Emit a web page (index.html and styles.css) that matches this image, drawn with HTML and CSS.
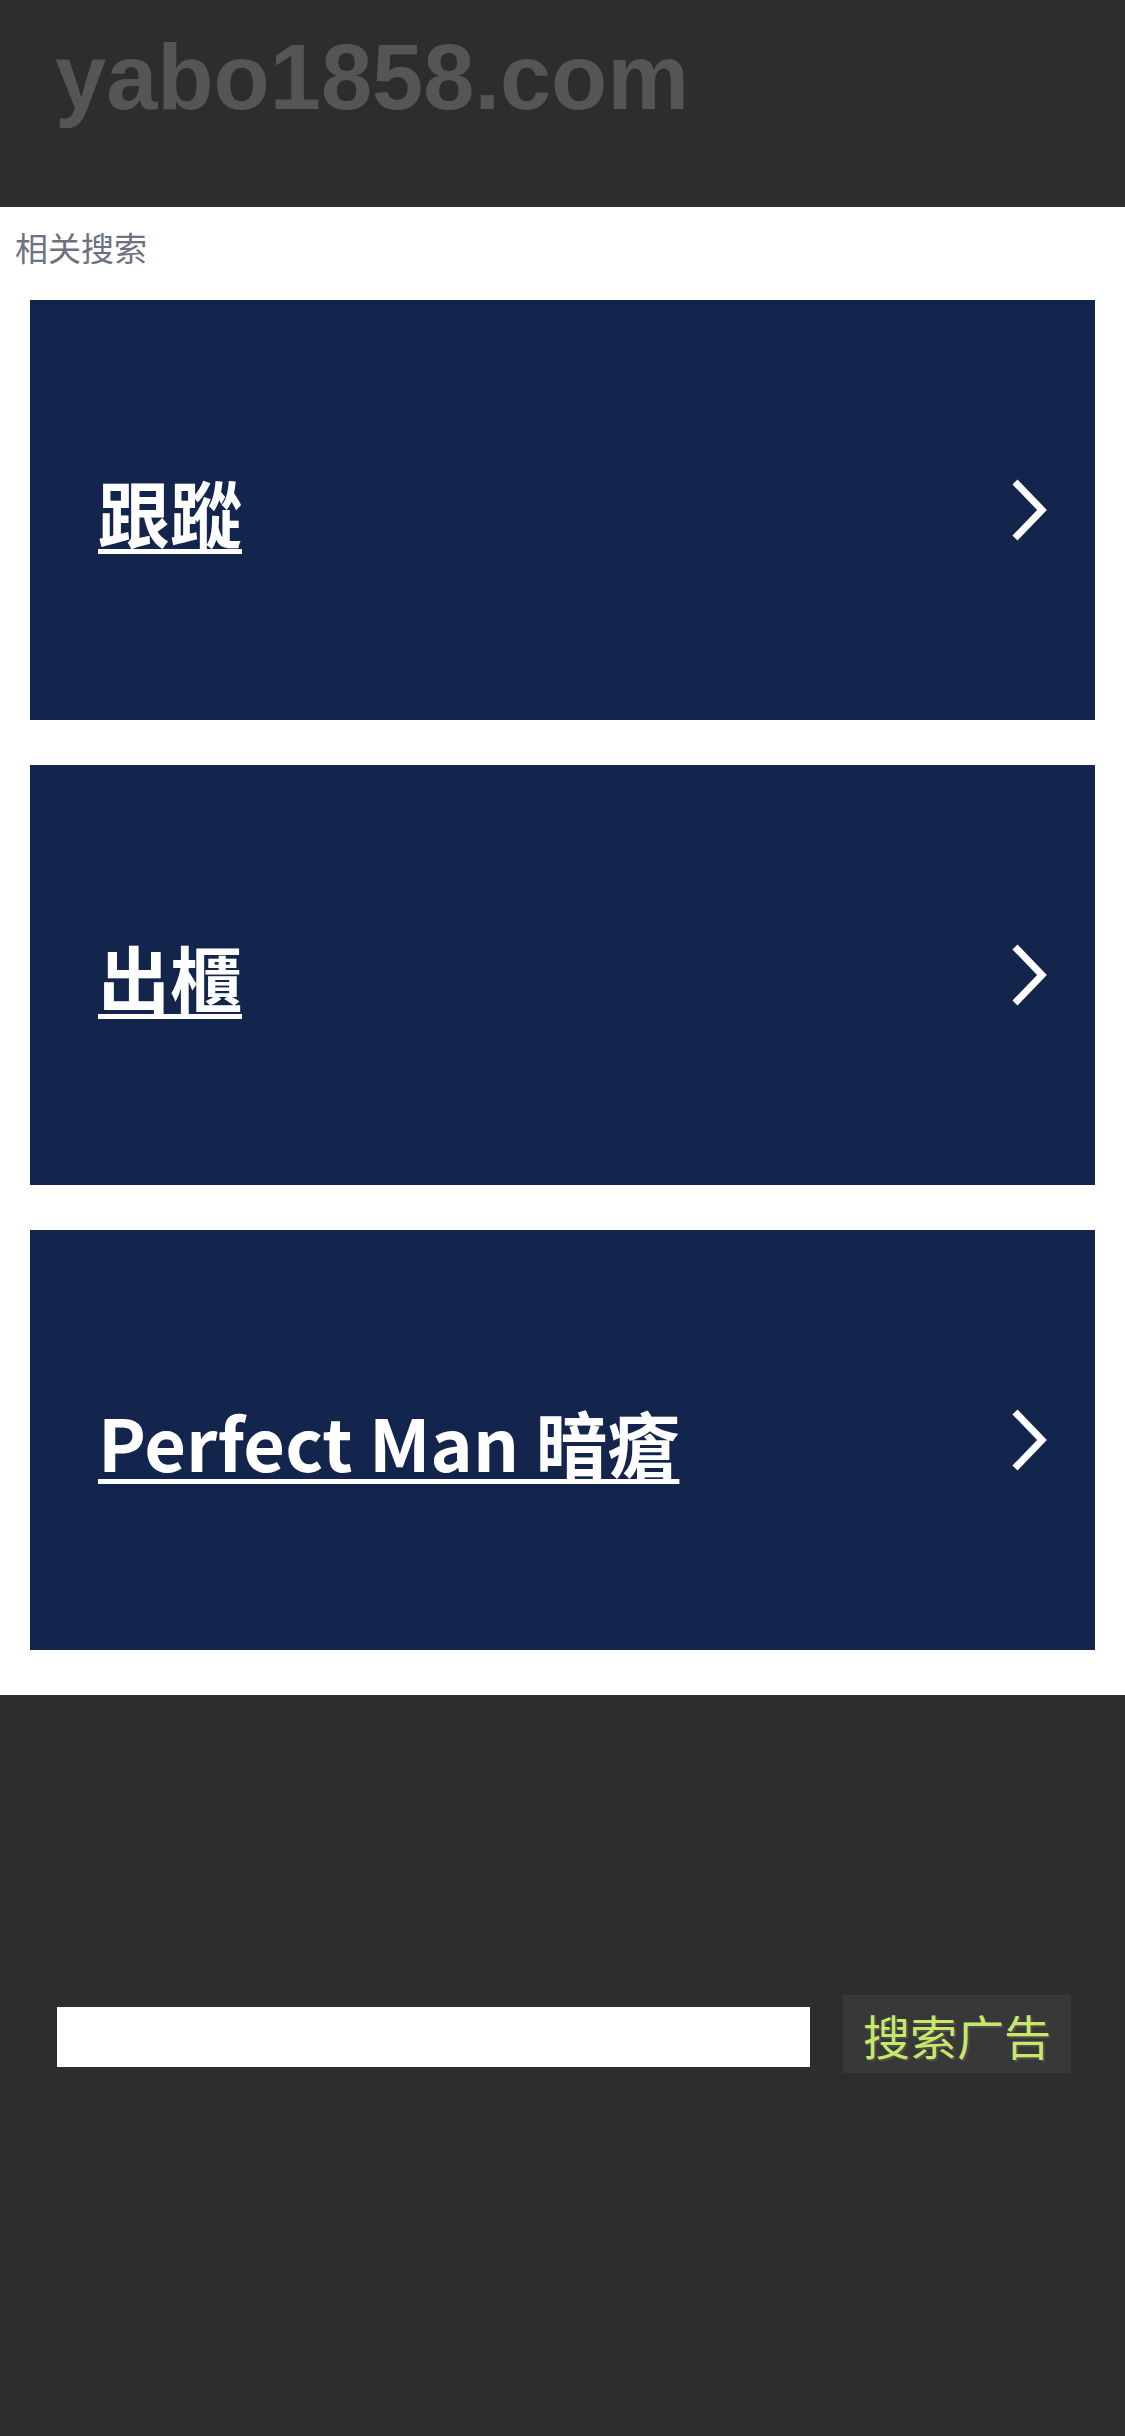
FILE: index.html
```html
<!DOCTYPE html>
<html lang="zh">
<head>
<meta charset="utf-8">
<title>yabo1858.com</title>
<link rel="stylesheet" href="styles.css">
</head>
<body>
<header class="site-header">
  <div class="site-title">yabo1858.com</div>
</header>
<main class="related">
  <div class="related-label">相关搜索</div>
  <div class="cards">
    <a class="card" href="#">
      <span class="card-text">跟蹤</span>
      <svg class="chev" width="40" height="62" viewBox="0 0 40 62"><polyline points="4,3 31,31 4,59" fill="none" stroke="#fff" stroke-width="7" stroke-linejoin="miter"/></svg>
    </a>
    <a class="card" href="#">
      <span class="card-text">出櫃</span>
      <svg class="chev" width="40" height="62" viewBox="0 0 40 62"><polyline points="4,3 31,31 4,59" fill="none" stroke="#fff" stroke-width="7" stroke-linejoin="miter"/></svg>
    </a>
    <a class="card" href="#">
      <span class="card-text">Perfect Man 暗瘡</span>
      <svg class="chev" width="40" height="62" viewBox="0 0 40 62"><polyline points="4,3 31,31 4,59" fill="none" stroke="#fff" stroke-width="7" stroke-linejoin="miter"/></svg>
    </a>
  </div>
</main>
<footer class="site-footer">
  <form class="search-row">
    <input class="search-input" type="text">
    <button class="search-btn" type="button">搜索广告</button>
  </form>
</footer>
</body>
</html>
```
FILE: styles.css
```css
* { box-sizing: border-box; }
html, body { margin: 0; padding: 0; }
body {
  background: #2d2d2d;
  font-family: "Noto Sans CJK TC", "Noto Sans CJK SC", sans-serif;
  min-height: 2436px;
}
.site-header {
  height: 207px;
  background: #2d2d2d;
  padding: 31px 55px 0;
}
.site-title {
  font-family: "Liberation Sans", Arial, sans-serif;
  font-weight: bold;
  font-size: 92px;
  line-height: 1;
  color: #555555;
}
.related {
  background: #ffffff;
  padding: 17px 0 45px;
}
.related-label {
  font-size: 33px;
  line-height: 46px;
  color: #6b7280;
  padding-left: 15px;
}
.cards {
  padding: 30px 30px 0;
  display: flex;
  flex-direction: column;
  gap: 45px;
}
.card {
  height: 420px;
  background: #13254d;
  display: flex;
  align-items: center;
  justify-content: space-between;
  padding: 0 44px 0 68px;
  color: #ffffff;
  text-decoration: none;
}
.card-text {
  font-size: 72px;
  font-weight: bold;
  color: #ffffff;
  text-decoration: underline;
  text-decoration-thickness: 5px;
  text-underline-offset: 7px;
}
.chev { display: block; }
.site-footer {
  background: #2d2d2d;
  padding: 300px 54px 0 57px;
}
.search-row {
  display: flex;
  align-items: flex-start;
  gap: 33px;
  margin: 0;
}
.search-input {
  width: 753px;
  height: 60px;
  margin: 12px 0 0;
  border: none;
  background: #ffffff;
  padding: 0 10px;
  outline: none;
}
.search-btn {
  width: 228px;
  height: 78px;
  background: #383838;
  border: none;
  color: #c8e86c;
  font-family: "Noto Sans CJK SC", sans-serif;
  font-size: 47px;
  line-height: 1;
  padding: 0;
  text-shadow: 2px 2px 0 rgba(90, 90, 90, 0.6);
}
```
